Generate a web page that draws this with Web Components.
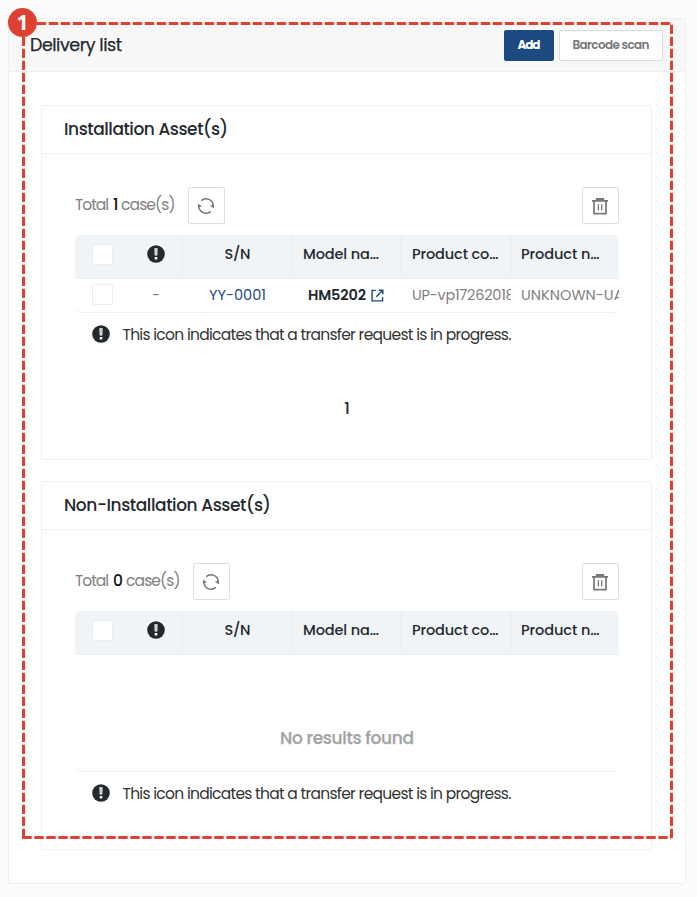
<!DOCTYPE html>
<html lang="en">
<head>
<meta charset="utf-8">
<title>Delivery list</title>
<style>
html,body{margin:0;height:100%;background:#fcfcfc;font-family:Poppins,Inter,"Open Sans",sans-serif;color:#24282d}
</style>
</head>
<body>
<delivery-page></delivery-page>
<script>
const define = (name, html, init) => {
  const tpl = document.createElement('template');
  tpl.innerHTML = html;
  customElements.define(name, class extends HTMLElement {
    connectedCallback() {
      if (this.shadowRoot) return;
      this.attachShadow({mode: 'open'}).append(tpl.content.cloneNode(true));
      if (init) init(this, this.shadowRoot);
    }
  });
};

/* A line of text tracked to the width given in its "w" attribute. */
define('fit-text', `<style>:host{display:inline-block;white-space:nowrap;flex:none}span{display:inline-block}</style><span><slot></slot></span>`,
  (el, root) => {
    const w = +el.getAttribute('w'), span = root.querySelector('span');
    const n = el.textContent.length;
    el.style.width = w + 'px';
    span.style.letterSpacing = ((w - span.getBoundingClientRect().width) / Math.max(1, n - 1)) + 'px';
  });

define('alert-icon', `<style>:host{display:block;width:18px;height:18px;flex:none}svg{display:block}</style>
<svg width="18" height="18" viewBox="0 0 18 18"><circle cx="9" cy="9" r="8.8" fill="#24282d"/><path d="M7.4 3.3h3.2l-.3 7.2H7.7z" fill="#fff"/><path d="M8.6 4.3h.8l-.1 5.4h-.6z" fill="#6c6f73"/><rect x="7.6" y="11.9" width="2.8" height="2.6" rx=".8" fill="#fff"/></svg>`);

define('check-box', `<style>:host{display:block;box-sizing:border-box;width:21px;height:21px;border:1px solid #e9eef3;border-radius:2px;background:#fff}</style>`);

define('icon-button', `<style>:host{display:flex;box-sizing:border-box;width:37px;height:37px;border:1px solid #dfdfdf;border-radius:2px;background:#fff;align-items:center;justify-content:center;flex:none}svg{display:block;margin:0 0 0 -1px}</style>`,
  (el, root) => {
    const icons = {
      refresh: `<g fill="none" stroke="#777" stroke-width="1.5"><path d="M4.2 3.6A7.2 7.2 0 0 1 16.2 9M13.8 14.4A7.2 7.2 0 0 1 1.8 9"/></g><path d="M.7 6.4l4.4 2.8-3.8 1.4zM17.3 11.6l-4.4-2.8 3.8-1.4z" fill="#777"/>`,
      trash: `<g fill="none" stroke="#777" stroke-width="1.7"><path d="M1 3.8h16M3 3.8v12.9h12V3.8"/><path d="M4.8 2h8.4" stroke-width="2"/><path d="M7.4 7.3v6.2M10.7 7.3v6.2" stroke-width="1.3"/></g>`};
    root.innerHTML += `<svg width="18" height="18" viewBox="0 0 18 18">${icons[el.getAttribute('icon')]}</svg>`;
  });

define('action-button', `<style>:host{display:flex;box-sizing:border-box;height:31px;width:104px;align-items:center;justify-content:center;border:1px solid #d8dce5;border-radius:2px;background:#fff;color:#777;font-size:12px;font-weight:600;padding-bottom:1px}
:host([primary]){width:50px;background:#1c4a80;border-color:#1c4a80;color:#fff;font-weight:700}</style><slot></slot>`);

define('transfer-note', `<style>:host{display:flex;align-items:center;height:44px;margin-top:-1px;padding-left:17px;gap:13px;font-size:15.5px;color:#333}fit-text{margin-top:1px;margin-left:-.5px}</style>
<alert-icon></alert-icon><fit-text w="389">This icon indicates that a transfer request is in progress.</fit-text>`);

define('asset-toolbar', `<style>:host{display:flex;height:37px;align-items:center;font-size:15.5px;color:#808080}
.t{display:flex;gap:4px;margin-top:-2px}b{font-weight:500;color:#111}icon-button[icon=refresh]{margin-left:12px}icon-button[icon=trash]{margin-left:auto}</style>
<div class="t"><fit-text w="34">Total</fit-text><b></b><fit-text w="54.5">case(s)</fit-text></div><icon-button icon="refresh"></icon-button><icon-button icon="trash"></icon-button>`,
  (el, root) => {
    const b = root.querySelector('b');
    b.textContent = el.getAttribute('count');
    b.style.width = b.textContent === '1' ? '4px' : '9px';
  });

define('asset-table', `<style>
:host{display:block;box-sizing:border-box;border-bottom:1px solid #eeeff0;border-radius:6px;overflow:hidden}
.head{display:grid;grid-template-columns:54px 54px 109px 110px 109px 109px;height:43px;background:#f0f4f7;border-bottom:1px solid #eaeff3;font-size:14.5px;font-weight:500}
.head>div{display:flex;align-items:center;height:39px;box-sizing:border-box;border-right:1px solid #e3eaf0}
.head>.c{justify-content:center}.head>.k{border:0}.head>.a{border-right-color:#eaeff3}.head>.l{padding:0 0 0 10px}.head>.m{padding-left:11px}
.head>.s{padding:0 0 0 1px}alert-icon{margin-top:-1px}
</style>
<div class="head"><div class="c k"><check-box></check-box></div><div class="c a"><alert-icon></alert-icon></div><div class="c s"><fit-text w="26">S/N</fit-text></div><div class="l m"><fit-text w="76">Model na…</fit-text></div><div class="l"><fit-text w="86.5">Product co…</fit-text></div><div class="l"><fit-text w="78.5">Product n…</fit-text></div></div><slot></slot>`);

define('asset-row', `<style>
:host{display:grid;grid-template-columns:54px 54px 109px 110px 109px 108px;height:33px;font-size:14.5px;color:#808080;overflow:hidden}
div{display:flex;align-items:center;overflow:hidden}.c{justify-content:center}.l{margin-left:10px}.sn{color:#1c4a80}.m{color:#24282d;font-weight:600;gap:5px;padding-right:2px}
check-box{margin-top:-2px}
</style>
<div class="c"><check-box></check-box></div><div class="c">-</div><div class="c sn"><fit-text w="57">YY-0001</fit-text></div>
<div class="c m"><fit-text w="58">HM5202</fit-text><svg width="13" height="13" viewBox="0 0 13 13" fill="none" stroke="#1c4a80" stroke-width="1.4"><path d="M4.8 1.4H1.1v10.5h10.5V8.2M7.8 1.2h4v4M11.8 1.2L5.3 7.7"/></svg></div>
<div class="l"><fit-text w="111">UP-vp172620183</fit-text></div><div class="l"><fit-text w="111">UNKNOWN-UAS</fit-text></div>`);

define('empty-row', `<style>:host{display:flex;align-items:flex-end;justify-content:center;height:116px;padding-bottom:20px;box-sizing:border-box;font-size:17px;font-weight:500;color:#a3a3a3;-webkit-text-stroke:.25px #a3a3a3}</style><fit-text w="134">No results found</fit-text>`);

define('asset-card', `<style>
:host{display:block;box-sizing:border-box;border:1px solid #f0f0f1;border-radius:2px;background:#fff}
header{box-sizing:border-box;height:48px;display:flex;align-items:center;padding:0 0 1px 22px;border-bottom:1px solid #f0f0f1;font-size:17px;font-weight:500}
.body{padding:33px 32px 0 33px}
</style><header><slot name="title"></slot></header><div class="body"><slot></slot></div>`);

/* Dashed outline with its step number, laid over the page. */
define('step-callout', `<style>:host{position:absolute;inset:0;pointer-events:none}svg{display:block}b{position:absolute;left:8px;top:8px;width:29px;height:29px;border-radius:50%;background:#dd4132;color:#fff;font:700 21px/29px "Noto Sans","Open Sans",sans-serif;text-align:center}</style>
<svg width="697" height="897" viewBox="0 0 697 897" fill="none" stroke="#dd4132" stroke-width="3" stroke-dasharray="9.4 2.6"><path d="M36.8 23.5H671"/><path d="M23.5 36.7V838"/><path d="M671.5 24.7V839"/><path d="M22.3 837.5H671"/></svg><b><slot></slot></b>`);

define('delivery-page', `<style>
:host{display:block;position:relative;width:697px;height:897px;box-sizing:border-box;padding:18px 11px 13px 8px;overflow:hidden}
main{box-sizing:border-box;height:866px;border:1px solid #f0f0f1;background:#fff}
.top{box-sizing:border-box;height:53px;background:#f8f8f8;border-bottom:1px solid #f0f0f1;display:flex;align-items:center;gap:5px;padding:0 22px 0 21px;font-size:17.5px;font-weight:500}
.top>fit-text{margin:0 auto 1px 0;font-weight:400;-webkit-text-stroke:.25px #24282d}
.cards{display:flex;flex-direction:column;gap:21px;padding:33px 33px 0 32px}
.one{height:355px}.two{height:369px}
asset-table{margin-top:11px}
.page{display:flex;justify-content:center;font-size:16px;font-weight:500;padding-top:40px}
</style>
<main><div class="top"><fit-text w="92">Delivery list</fit-text><action-button primary><fit-text w="23">Add</fit-text></action-button><action-button><fit-text w="77">Barcode scan</fit-text></action-button></div>
<div class="cards">
<asset-card class="one"><fit-text slot="title" w="164">Installation Asset(s)</fit-text><asset-toolbar count="1"></asset-toolbar><asset-table><asset-row></asset-row></asset-table><transfer-note></transfer-note><div class="page">1</div></asset-card>
<asset-card class="two"><fit-text slot="title" w="207">Non-Installation Asset(s)</fit-text><asset-toolbar count="0"></asset-toolbar><asset-table><empty-row></empty-row></asset-table><transfer-note></transfer-note></asset-card>
</div></main><step-callout>1</step-callout>`);
</script>
</body>
</html>
